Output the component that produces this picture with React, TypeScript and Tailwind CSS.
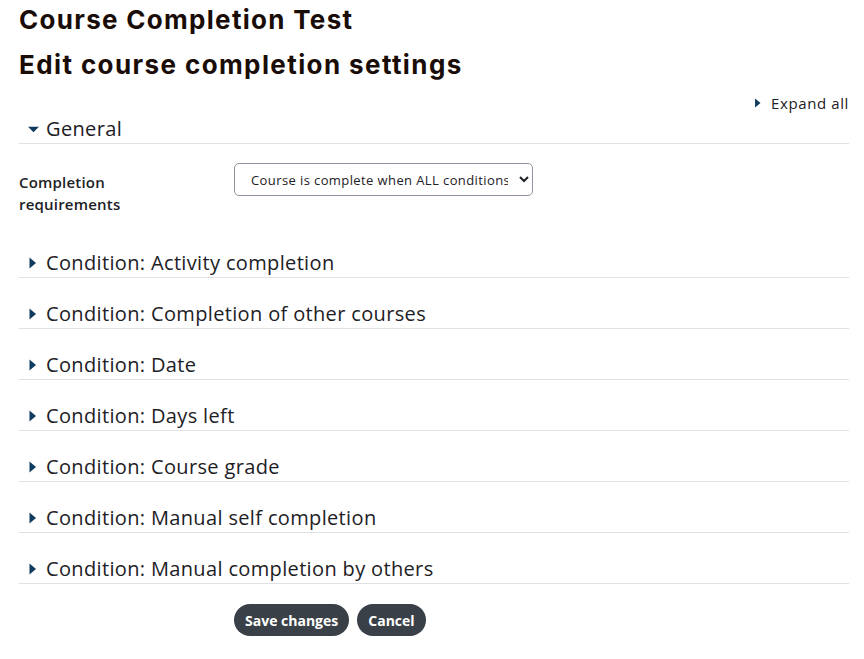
import React from "react";

const conditions = [
  "Condition: Activity completion",
  "Condition: Completion of other courses",
  "Condition: Date",
  "Condition: Days left",
  "Condition: Course grade",
  "Condition: Manual self completion",
  "Condition: Manual completion by others",
];

function Caret({ open = false, size = 12 }: { open?: boolean; size?: number }) {
  return (
    <svg width={size} height={size} viewBox="0 0 12 12" className="shrink-0">
      {open ? (
        <path d="M1 3.5 L11 3.5 L6 8.5 Z" fill="#0f3b5f" />
      ) : (
        <path d="M2.5 0.5 L9 6 L2.5 11.5 Z" fill="#0f3b5f" />
      )}
    </svg>
  );
}

export default function App() {
  return (
    <div className="min-h-screen bg-white pl-[19px] pr-[15px] text-[#1d2125] [font-family:'Open_Sans','Noto_Sans',sans-serif]">
      <h1 className="text-[26px] font-bold leading-[40px] tracking-[1.3px] text-[#1a0d08] [font-family:Inter,sans-serif]">
        Course Completion Test
      </h1>
      <h2 className="mt-[5px] text-[26px] font-bold leading-[40px] tracking-[1.4px] text-[#1a0d08] [font-family:Inter,sans-serif]">
        Edit course completion settings
      </h2>

      <div className="mt-[6px] flex h-[24px] items-center justify-end gap-[8px] text-[15px] tracking-[0.6px]">
        <Caret size={10} />
        <span>Expand all</span>
      </div>

      {/* General */}
      <div className="flex h-[29px] items-center gap-[6px] border-b border-[#dee2e6] pl-[8px] text-[20px] tracking-[0.35px]">
        <Caret open size={13} />
        <span>General</span>
      </div>

      <div className="mt-[19px] flex">
        <div className="w-[215px] pt-[8px] text-[15px] font-semibold leading-[22px] tracking-[0.2px]">
          Completion
          <br />
          requirements
        </div>
        <select className="h-[33px] w-[299px] rounded-[5px] border border-[#8f959e] bg-white pl-[12px] pr-[8px] text-[13px] tracking-[0.4px] text-[#1d2125] outline-none">
          <option>Course is complete when ALL conditions are met</option>
        </select>
      </div>

      <div className="mt-[34px]">
        {conditions.map((c) => (
          <div
            key={c}
            className="mt-[22px] flex h-[29px] items-center gap-[7px] border-b border-[#dee2e6] pl-[8px] text-[20px] tracking-[0.35px]"
          >
            <Caret size={12} />
            <span>{c}</span>
          </div>
        ))}
      </div>

      <div className="mt-[20px] flex gap-[8px] pl-[215px]">
        <button className="h-[32px] rounded-full bg-[#3a4048] px-[11px] text-[14px] font-bold text-white">
          Save changes
        </button>
        <button className="h-[32px] rounded-full bg-[#3a4048] px-[11px] text-[14px] font-bold text-white">
          Cancel
        </button>
      </div>
    </div>
  );
}
